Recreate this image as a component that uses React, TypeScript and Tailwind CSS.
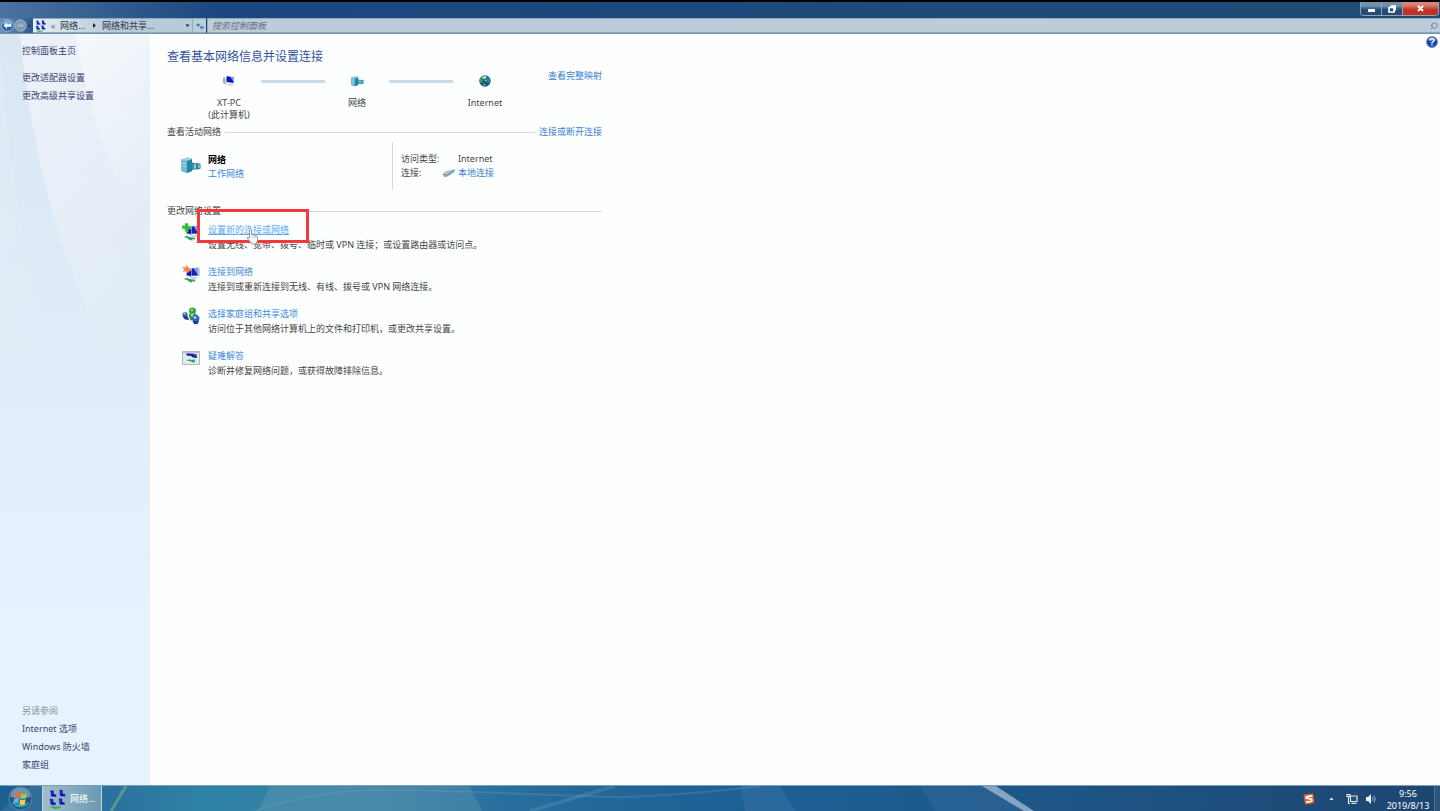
import React from 'react';
import { Search } from 'lucide-react';

interface Task {
  title: string;
  description: string;
  icon: React.ReactNode;
}

/* Icons */

const ComputerIcon = () => (
  <svg width="12" height="12" viewBox="0 0 12 12" aria-hidden="true">
    <path d="M0 3l2-1v7l-2-1z" fill="#a5abb3" />
    <path d="M2 3.5h2v6H2z" fill="#c9cdd3" />
    <path d="M3 .8l8 1.2v7l-8-1.5z" fill="#cdd5ee" />
    <path d="M3.600 1.200l6.800 1v5.800l-6.800-1.300z" fill="#0815c0" />
    <path d="M7 1.800l3.600.5v4.700z" fill="#8797ee" />
    <path d="M4.500 9l5 .6 1 1.200-5.500-.5z" fill="#b9bec8" />
  </svg>
);

const NetworkIcon: React.FC<{ className: string }> = ({ className }) => (
  <svg className={className} viewBox="0 0 20 18" aria-hidden="true">
    <path d="M.5 3.500L7 1.500l4 1.500v12L6 17l-5.500-2z" fill="#3e9dbd" />
    <path d="M.5 3.500L6 5v12L.5 15z" fill="#6fb9d2" />
    <path d="M6 5l5-2v12L6 17z" fill="#2585a8" />
    <path d="M.5 3.500l6.500-2L11 3 6 5z" fill="#a3d2e2" />
    <path d="M1.500 7l3.500 1M1.500 10l3.500 1" stroke="#d2edf4" strokeWidth="0.7" />
    <path d="M11 6.500l5 .8v6l-5 .7z" fill="#3e8ba6" />
    <path d="M13 8l2 .3v4l-2 .4z" fill="#8fd0e4" />
    <path d="M15.500 7l4 .7v5l-4 1z" fill="#327f9c" />
    <path d="M17 8.500l2 .3v3l-2 .4z" fill="#79bcd2" />
  </svg>
);

const GlobeIcon = () => (
  <svg width="12" height="12" viewBox="0 0 12 12" aria-hidden="true">
    <circle cx="6" cy="6" r="5.700" fill="#174d9e" />
    <path d="M.8 4Q2 1.500 5 .7L6 3 4 4.500 3.500 7.500 1.200 8z" fill="#34a344" />
    <path d="M8 2.500l2 .2 1.200 3L10 9 8.500 7.500 7.500 6z" fill="#2b8f4c" />
    <path d="M4 8.500l3 .3L6.500 11.500l-2.500-.6z" fill="#2f9d73" />
    <path d="M3 2Q5 .5 8 1.500L6.500 4 4.500 3.800z" fill="#bfe9e4" opacity="0.900" />
    <path d="M4.800 5l3-.7L7.500 7z" fill="#58b7ee" />
  </svg>
);

const PlugIcon = () => (
  <svg width="12" height="8" viewBox="0 0 12 8" aria-hidden="true">
    <path d="M0 4.500l5-3 4 .2L8 5.500 3 8 .5 7.500z" fill="#8f9ba3" />
    <path d="M1 4.500L6 1.800l2 .5L3.500 5.500z" fill="#c0cad0" />
    <path d="M8 1.500L12 0l-1 3.200-2.500 1.500z" fill="#5badb9" />
  </svg>
);

// Pair of linked screens shared by the first two tasks
const Screens = () => (
  <g>
    <path d="M4.500 4l5 1v6.500l-5-1z" fill="#0a16a8" stroke="#a9b4de" strokeWidth="0.600" />
    <path d="M9 3l7.500-.8v9L9 11.500z" fill="#dbe1f3" />
    <path d="M9.500 3.500l6.300-.7v7.700l-6.300.3z" fill="#1623b4" />
    <path d="M11.500 3.300l4.300-.5v7z" fill="#93a0ea" />
    <path d="M16.500 2.500l1.200.5v8l-1.200.3z" fill="#aab0bf" />
    <path d="M8 12.300l6-.3 2 1.500-6 .3z" fill="#c5cad3" />
    <path d="M1.500 14l5-1.500-.5 1.200 5 .8 2.500.2-.5 1.700-3-.2.5 1.600-5-1.800 1-.5z" fill="#27a463" />
  </g>
);

const NewConnectionIcon = () => (
  <svg width="18" height="18" viewBox="0 0 18 18" aria-hidden="true">
    <Screens />
    <path d="M3 0l3.200.5L6 3h3v3L6 5.800V9L3 8.500V6L0 5.500v-3l3 .3z" fill="#2dbd2a" stroke="#8fd98c" strokeWidth="0.500" />
  </svg>
);

const ConnectIcon = () => (
  <svg width="18" height="18" viewBox="0 0 18 18" aria-hidden="true">
    <Screens />
    <path d="M0 2l4 .3L3.800 0 9.500 4.800 4 8.500V6.200L.8 7 2 4.300z" fill="#ef8650" stroke="#f9c4a4" strokeWidth="0.500" />
  </svg>
);

const HomegroupIcon = () => (
  <svg width="18" height="18" viewBox="0 0 18 18" aria-hidden="true">
    <circle cx="10.500" cy="4" r="3.500" fill="#37a447" />
    <path d="M6.500 7.500Q10 5.500 15 7.500L13.500 13l-5 .5z" fill="#2b9540" />
    <path d="M8 7.500l4-1.500-1.500 4.500z" fill="#a0e095" />
    <circle cx="3" cy="7.500" r="2.600" fill="#3a66b5" />
    <path d="M.5 9.500Q3 8 6 9.500l1 3.500-4-.5z" fill="#1d4390" />
    <circle cx="13.800" cy="11.500" r="3.600" fill="#2d62c4" />
    <path d="M10.500 14h6.500l-1.500 3.300-3.500-.3z" fill="#173f9a" />
    <circle cx="13" cy="10.500" r="1.500" fill="#a8c9f5" />
    <circle cx="2.500" cy="6.500" r="1" fill="#b9cdee" />
    <circle cx="10" cy="3" r="1.200" fill="#9adb9a" />
  </svg>
);

const TroubleshootIcon = () => (
  <svg width="18" height="14" viewBox="0 0 18 14" aria-hidden="true">
    <path d="M.5.500h17v13H.5z" fill="#e4e9ee" stroke="#b3b7be" />
    <path d="M1 1h16v1.300H1z" fill="#c0c5cd" />
    <path d="M4.500 2.300l10 .7.500 4-4-.5-2-1.500-4.500-.5z" fill="#101eae" />
    <path d="M11 3l3.500.2.300 2.300z" fill="#6579dd" />
    <path d="M4 9.500L8.500 8l-.3 1 4.800-.5v2.800l-3 .2-1-1.200z" fill="#28a860" />
  </svg>
);

const CenterIcon: React.FC<{ className: string }> = ({ className }) => (
  <svg className={className} viewBox="0 0 18 20" aria-hidden="true">
    <path d="M2 1l4 .5V5l2.500.3V8L3 7.800zM11 .5l4 .5v3.500l2.500.5v2.800L12 7.500zM1.500 9.500l4 .5v3l2.500.5v2.700L2.500 16zM10.500 9l4 .5V13l2.500.3v2.700l-5.500-.3z" fill="#0812a8" stroke="#a9bce4" strokeWidth="0.500" />
    <path d="M3 2.500l2 2.500M12 2l2 2.500M2.500 11l2 2.500M11.500 10.500l2 2.500" stroke="#4355d0" strokeWidth="0.900" />
    <path d="M1 17.800l5-.8 1 .8 6-.3-.5 1.500-5.500 1z" fill="#2eb548" />
  </svg>
);

const BackIcon = () => (
  <svg width="13" height="13" viewBox="0 0 13 13" aria-hidden="true">
    <circle cx="6.500" cy="6.500" r="6" fill="#1f66ad" stroke="#8fb3d2" />
    <path d="M1.500 5a5 5 0 0 1 10 0Q6 7 1.500 5" fill="#76aad8" />
    <path d="M4 11a5 3 0 0 1 5 0z" fill="#4fc0ea" />
    <path d="M2.500 6.500l3.500-3.300v2h4.500v2.600H6v2z" fill="#fff" />
  </svg>
);

const ForwardIcon = () => (
  <svg width="13" height="13" viewBox="0 0 13 13" aria-hidden="true">
    <circle cx="6.500" cy="6.500" r="5.700" fill="#8098b0" stroke="#a3b8cb" />
    <path d="M10 6.500L7 3.800v1.700H3v2h4v1.700z" fill="#a3b7c9" />
  </svg>
);

const RefreshIcon = () => (
  <svg width="8" height="8" viewBox="0 0 8 8" aria-hidden="true">
    <path d="M0 3l2.500-2v1.300H4v1.400H2.500V5zM8 5.500L5.500 3.500v1.300H4v1.400h1.500v1.300z" fill="#3a76b3" />
  </svg>
);

const HelpIcon = () => (
  <svg width="12" height="12" viewBox="0 0 12 12" aria-hidden="true">
    <circle cx="6" cy="6" r="5.500" fill="#1b43ac" stroke="#7d93c7" />
    <path d="M2 4a4.200 4.200 0 0 1 8 0Q6 6 2 4" fill="#5479cf" />
    <path d="M4 4.500Q4 2.800 6 2.800T8 4.500Q8 5.400 6 6.500v1M6 8.300v1.300" fill="none" stroke="#fff" strokeWidth="1.400" />
  </svg>
);

const HandCursor = () => (
  <svg className="pointer-events-none absolute left-[38px] top-[6px] z-10" width="13" height="18" viewBox="0 0 13 18" aria-hidden="true">
    <path
      d="M3.500 9V2Q4.500.6 5.500 2v4.500l1.500.2 1.500.5 1.500.5 1.500 1v4l-1.500 3.300H5.500L3.500 13 1 10Q1.500 8 3.500 10z"
      fill="#f2f6f8"
      stroke="#88939b"
      strokeWidth="0.900"
    />
    <path d="M7 8v2M9 8.500v2" stroke="#a0a9af" strokeWidth="0.600" />
  </svg>
);

const StartOrb = () => (
  <svg width="25" height="25" viewBox="0 0 26 26" aria-hidden="true">
    <circle cx="13" cy="13" r="12" fill="#235a80" stroke="#5f8dab" />
    <path d="M2.500 11a10.500 9.500 0 0 1 21 0Q13 15 2.500 11" fill="#8aa9bd" opacity="0.750" />
    <path d="M4 17Q13 22 22 17A10 9 0 0 1 4 17" fill="#35b5d6" opacity="0.850" />
    <path d="M7.500 7.500Q10 5.500 13 7l-1 5Q9 10.800 6.500 12.500z" fill="#ea6d38" />
    <path d="M14 7.500Q16.500 9 19.500 7.500l-1 5.200q-3 1.500-5.500-.2z" fill="#9fc655" />
    <path d="M6.300 13.500Q9 12 11.800 13l-1 5.200Q8 17 5.300 18.500z" fill="#5db1ea" />
    <path d="M12.800 13.700q2.700 1.500 5.500.2l-1 5.100q-3 1.500-5.500-.2z" fill="#fbd04c" />
  </svg>
);

const SogouIcon = () => (
  <svg width="12" height="12" viewBox="0 0 12 12" aria-hidden="true">
    <path d="M.5 1.800L10 .5 11.500 10 2 11.500z" fill="#e9622f" />
    <path d="M9.500 3L5 3.300Q3 3.700 3.500 5l5 1.200Q9.500 8 7.500 8.600L3 9" fill="none" stroke="#fff" strokeWidth="1.700" />
  </svg>
);

const TrayNetworkIcon = () => (
  <svg width="13" height="12" viewBox="0 0 13 12" aria-hidden="true">
    <path d="M1 1.500h3v2H1zM2.500 4v6.500h1.500" fill="none" stroke="#e2e9f0" strokeWidth="1.200" />
    <path d="M4.500 3H11v5.500H4.500zM5.500 10.300h5" fill="#274f78" stroke="#dbe4ec" strokeWidth="1.200" />
  </svg>
);

const SpeakerIcon = () => (
  <svg width="12" height="12" viewBox="0 0 12 12" aria-hidden="true">
    <path d="M1 4h2l3-3v10L3 8H1z" fill="#f1f4f7" />
    <path d="M7.500 4q1.200 2 0 4M9 2.500q2.500 3.500 0 7" fill="none" stroke="#9db3c8" strokeWidth="0.900" />
  </svg>
);

const Triangle: React.FC<{ d: string; fill: string }> = ({ d, fill }) => (
  <svg width="5" height="5" viewBox="0 0 5 5" aria-hidden="true">
    <path d={d} fill={fill} />
  </svg>
);

/* Data */

const sideLinks = ['更改适配器设置', '更改高级共享设置'];
const seeAlso = ['Internet 选项', 'Windows 防火墙', '家庭组'];

const tasks: Task[] = [
  {
    title: '设置新的连接或网络',
    description: '设置无线、宽带、拨号、临时或 VPN 连接；或设置路由器或访问点。',
    icon: <NewConnectionIcon />,
  },
  {
    title: '连接到网络',
    description: '连接到或重新连接到无线、有线、拨号或 VPN 网络连接。',
    icon: <ConnectIcon />,
  },
  {
    title: '选择家庭组和共享选项',
    description: '访问位于其他网络计算机上的文件和打印机，或更改共享设置。',
    icon: <HomegroupIcon />,
  },
  {
    title: '疑难解答',
    description: '诊断并修复网络问题，或获得故障排除信息。',
    icon: <TroubleshootIcon />,
  },
];

/* Window parts */

const TitleBar = () => (
  <header className="bg-linear-to-r from-[#4a72a0] via-[#1b4880] via-15% to-[#204c76]">
    <div className="h-[2px] bg-black" />
    <div className="flex h-[16px] justify-end pr-px">
      <div className="flex h-[14px] overflow-hidden rounded-b-sm border border-t-0 border-[#8ba4ba]">
        <button aria-label="最小化" className="flex w-[21px] items-center justify-center border-r border-[#8ba4ba] bg-linear-to-b from-[#7390ab] from-30% to-[#254a73] to-60%">
          <span className="mt-1 h-[3px] w-[7px] bg-white" />
        </button>
        <button aria-label="还原" className="flex w-[21px] items-center justify-center border-r border-[#8ba4ba] bg-linear-to-b from-[#7390ab] from-30% to-[#254a73] to-60%">
          <svg width="8" height="8" viewBox="0 0 8 8" aria-hidden="true">
            <path d="M2.500 1h5v4.500M1 2.500h5v4.500H1z" fill="none" stroke="#fff" strokeWidth="1.700" />
          </svg>
        </button>
        <button aria-label="关闭" className="flex w-[35px] items-center justify-center bg-linear-to-b from-[#d98478] from-20% to-[#c2301f] to-60%">
          <svg width="7" height="7" viewBox="0 0 7 7" aria-hidden="true">
            <path d="M1 1l5 5M6 1L1 6" stroke="#fff" strokeWidth="1.800" />
          </svg>
        </button>
      </div>
    </div>

    <div className="flex h-[16px] items-stretch border-b border-[#7592ab] text-[#2c3a48]">
      <div className="flex w-[33px] items-center bg-linear-to-r from-[#7390b0] to-[#2c588a] pl-px">
        <button aria-label="后退"><BackIcon /></button>
        <button aria-label="前进"><ForwardIcon /></button>
        <button aria-label="最近的页面"><Triangle d="M1 2h3L2.500 4z" fill="#0f2b4c" /></button>
      </div>
      <nav aria-label="地址" className="flex w-[159px] items-center border-y border-[#8fa8bc] bg-linear-to-r from-[#e6eef4] to-[#b9cad9] to-50% pl-[2px] pr-[2px]">
        <CenterIcon className="h-[12px] w-[11px]" />
        <span className="w-[14px] text-center text-[#6b7885]">«</span>
        <a href="#network" className="w-[31px]">网络...</a>
        <span className="flex w-[11px]"><Triangle d="M2 0l3 2.500L2 5z" fill="#1a2735" /></span>
        <a href="#sharing">网络和共享...</a>
        <button aria-label="以前的位置" className="ml-auto"><Triangle d="M.5 1.500h4L2.500 4z" fill="#1a2735" /></button>
      </nav>
      <button aria-label="刷新" className="flex w-[14px] items-center justify-center border border-r-0 border-[#8fa8bc] bg-[#bccddb]">
        <RefreshIcon />
      </button>
      <label className="ml-px flex flex-1 items-center border border-r-0 border-[#8fa8bc] bg-[#bdccd9] pl-1 pr-[2px]">
        <input
          type="search"
          aria-label="搜索控制面板"
          placeholder="搜索控制面板"
          className="h-[13px] flex-1 bg-transparent italic outline-none placeholder:text-[#66737f]"
        />
        <Search size={8} color="#3c6a9c" className="-scale-x-100" aria-hidden="true" />
      </label>
    </div>
  </header>
);

const Sidebar = () => (
  <aside className="relative flex w-[150px] shrink-0 flex-col bg-linear-to-b from-[#dbe6f3] to-[#e6f2fd] to-80% pb-[11px] pl-[22px] pt-[8px] leading-[18px] text-[#3a4270]">
    <svg className="absolute inset-0 h-full w-full" viewBox="0 0 150 750" preserveAspectRatio="none" aria-hidden="true">
      <defs>
        <linearGradient id="haze" x1="0" x2="0.300" y1="0" y2="1">
          <stop offset="0" stopColor="#fff" stopOpacity="0.500" />
          <stop offset="1" stopColor="#fff" stopOpacity="0" />
        </linearGradient>
      </defs>
      <path d="M20 0h130v400Q40 220 20 0" fill="url(#haze)" />
      <path d="M75 0h75v210Q95 120 75 0" fill="url(#haze)" />
      <path d="M0 20Q20 260 80 400Q20 380 0 300z" fill="url(#haze)" opacity="0.300" />
    </svg>
    <nav className="relative flex flex-1 flex-col items-start">
      <a href="#home" className="mb-[9px]">控制面板主页</a>
      {sideLinks.map((link) => (
        <a key={link} href="#settings">{link}</a>
      ))}
      <h2 className="mt-auto text-[#8b9096]">另请参阅</h2>
      {seeAlso.map((link) => (
        <a key={link} href="#see-also">{link}</a>
      ))}
    </nav>
  </aside>
);

const NetworkMap = () => (
  <div className="flex items-start pl-[30px] pt-[4px]">
    <div className="mt-[5px] flex w-16 flex-col items-center">
      <ComputerIcon />
      <span className="mt-[10px] text-center">XT-PC<br />(此计算机)</span>
    </div>
    <div className="mt-[10px] h-[3px] w-16 bg-[#cbd9e8]" />
    <div className="mt-[5px] flex w-16 flex-col items-center">
      <NetworkIcon className="h-[12px] w-[13px]" />
      <span className="mt-[10px]">网络</span>
    </div>
    <div className="mt-[10px] h-[3px] w-16 bg-[#cbd9e8]" />
    <div className="mt-[5px] flex w-16 flex-col items-center">
      <GlobeIcon />
      <span className="mt-[10px]">Internet</span>
    </div>
    <a href="#map" className="ml-auto text-[#3a80d2]">查看完整映射</a>
  </div>
);

const ActiveNetwork = () => (
  <div className="mt-[4px] flex h-[48px] leading-[14px]">
    <div className="flex w-[226px] items-start border-r border-[#d5d9dc] pl-[14px]">
      <NetworkIcon className="mt-[14px] h-[18px] w-[20px]" />
      <div className="ml-[7px] mt-[11px] flex flex-col">
        <span className="font-bold text-black">网络</span>
        <a href="#work" className="text-[#3f88da]">工作网络</a>
      </div>
    </div>
    <dl className="ml-[8px] mt-[10px] grid grid-cols-[42px_1fr] content-start">
      <dt>访问类型:</dt>
      <dd className="pl-[15px]">Internet</dd>
      <dt>连接:</dt>
      <dd className="flex items-center gap-[3px]">
        <PlugIcon />
        <a href="#local" className="text-[#3a80d2]">本地连接</a>
      </dd>
    </dl>
  </div>
);

const Taskbar = () => (
  <footer className="relative flex h-[26px] items-stretch overflow-hidden border-t border-[#7d9fb8] bg-linear-to-r from-[#1f5e90] via-[#1d6096] via-55% to-[#1d4670] text-white">
    <svg className="absolute inset-0 h-full w-full" viewBox="0 0 1440 26" preserveAspectRatio="none" aria-hidden="true">
      <defs>
        <linearGradient id="aurora" x1="0" x2="1" y1="0" y2="0">
          <stop offset="0" stopColor="#2a709c" />
          <stop offset="0.150" stopColor="#2f82a5" />
          <stop offset="0.400" stopColor="#3680a7" />
          <stop offset="1" stopColor="#1d6096" stopOpacity="0" />
        </linearGradient>
      </defs>
      <path d="M100 0h700v26H100z" fill="url(#aurora)" />
      <path d="M270 0h200l12 26H258z" fill="#7fa9b8" opacity="0.250" />
      <path d="M0 26L30 0h12v26z" fill="#7fa9c8" opacity="0.200" />
      <path d="M111 26L126 0" stroke="#7fb48d" strokeWidth="3" opacity="0.550" />
      <path d="M255 26Q320 2 400 4t220 8Q700 8 760 0" fill="none" stroke="#78a9c3" strokeWidth="2" opacity="0.250" />
      <path d="M530 26L615 0" stroke="#78a9c3" strokeWidth="4" opacity="0.250" />
      <path d="M740 0h40l15 26h-50z" fill="#5a8fbd" opacity="0.200" />
      <path d="M920 0h70l40 26h-95z" fill="#4779a8" opacity="0.250" />
      <path d="M982 0h14l38 26h-10z" fill="#9db6d0" opacity="0.800" />
    </svg>
    <button aria-label="开始" className="relative flex w-[42px] items-center justify-center pr-[2px]">
      <StartOrb />
    </button>
    <button className="relative flex w-[60px] items-center gap-[4px] border-x border-[#bdd2de] bg-linear-to-r from-[#9fbdcc] to-[#6a9ab1] pl-[5px]">
      <CenterIcon className="h-[20px] w-[18px]" />
      网络...
    </button>
    <div className="relative ml-auto flex items-center">
      <SogouIcon />
      <button aria-label="显示隐藏的图标" className="ml-[14px]"><Triangle d="M.5 4h4L2.500 1.500z" fill="#e8eef4" /></button>
      <span className="ml-[12px]"><TrayNetworkIcon /></span>
      <span className="ml-[6px]"><SpeakerIcon /></span>
      <time className="ml-[8px] mt-[2px] w-[46px] text-center leading-[12px]">9:56<br />2019/8/13</time>
    </div>
    <button aria-label="显示桌面" className="relative ml-[3px] w-[6px] border-l border-[#4f7496] bg-[#2d557d]" />
  </footer>
);

export default function App() {
  return (
    <div
      lang="zh-CN"
      className="flex min-h-screen flex-col bg-[#fdfffe] font-['Noto_Sans','Noto_Sans_CJK_SC',sans-serif] text-[9px] leading-[12px] text-[#444444]"
    >
      <TitleBar />

      <div className="flex flex-1">
        <Sidebar />

        <main className="flex-1 pl-[17px] pt-[14px]">
          <div className="w-[435px]">
            <h1 className="text-[12px] leading-[18px] text-[#3552a0]">查看基本网络信息并设置连接</h1>
            <NetworkMap />

            <section>
              <div className="mt-[5px] flex items-center gap-[4px]">
                <h2>查看活动网络</h2>
                <div className="h-px flex-1 bg-[#d5d9dc]" />
                <a href="#connect" className="text-[#3a80d2]">连接或断开连接</a>
              </div>
              <ActiveNetwork />
            </section>

            <section>
              <div className="mt-[15px] flex items-center gap-[4px]">
                <h2>更改网络设置</h2>
                <div className="h-px flex-1 bg-[#d5d9dc]" />
              </div>
              <ul className="mt-[5px] flex flex-col gap-[12px] pl-[15px] leading-[15px]">
                {tasks.map((task, index) => (
                  <li key={task.title} className="relative flex items-start">
                    <span className="flex h-[20px] w-[18px] items-center">{task.icon}</span>
                    <div className="ml-[8px]">
                      <a href="#task" className={index === 0 ? 'relative block w-max text-[#5baaf2] underline' : 'block w-max text-[#3f88da]'}>
                        {task.title}
                        {index === 0 && <HandCursor />}
                      </a>
                      <p className="whitespace-nowrap">{task.description}</p>
                    </div>
                    {index === 0 && (
                      <span className="pointer-events-none absolute -top-[13px] left-[15px] h-[34px] w-[112px] border-3 border-[#f5383c]" />
                    )}
                  </li>
                ))}
              </ul>
            </section>
          </div>
        </main>

        <div className="pr-[2px] pt-[2px]">
          <button aria-label="帮助" className="block"><HelpIcon /></button>
        </div>
      </div>

      <Taskbar />
    </div>
  );
}
